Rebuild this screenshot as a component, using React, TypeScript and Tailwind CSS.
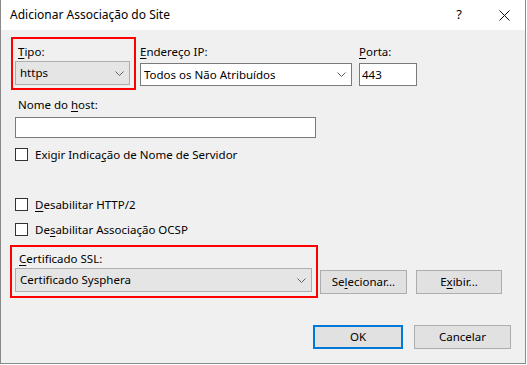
import type { ReactNode } from "react";

const FONT = { fontFamily: '"Noto Sans", "Liberation Sans", sans-serif' };

function Chevron() {
  return (
    <svg width="9" height="5" viewBox="0 0 9 5" className="shrink-0">
      <path d="M0.5 0.5 L4.5 4.5 L8.5 0.5" fill="none" stroke="#606060" strokeWidth="1" />
    </svg>
  );
}

function U({ children }: { children: ReactNode }) {
  return <span className="underline underline-offset-2 decoration-1">{children}</span>;
}

function Checkbox({ children }: { children: ReactNode }) {
  return (
    <label className="flex h-[13px] items-center gap-[7px]">
      <span className="h-[13px] w-[13px] shrink-0 border border-[#333333] bg-white" />
      <span className="leading-[16px]">{children}</span>
    </label>
  );
}

function Button({ children, width, primary }: { children: ReactNode; width: string; primary?: boolean }) {
  return (
    <button
      type="button"
      className={`flex h-[24px] items-center justify-center bg-[#e1e1e1] ${width} ${
        primary ? "border-2 border-[#0078d7]" : "border border-[#adadad]"
      }`}
    >
      {children}
    </button>
  );
}

export default function App() {
  return (
    <div className="h-[365px] w-[527px] bg-white text-[11.5px] text-black" style={FONT}>
      <div className="flex h-[364px] w-[526px] flex-col border-x border-b border-[#8a8a8a]">
        <div className="flex h-[30px] items-center bg-white pl-[9px] pr-[15px] text-[12px]">
          <span className="flex-1">Adicionar Associação do Site</span>
          <span className="mr-[37px] text-[13px]">?</span>
          <svg width="11" height="11" viewBox="0 0 11 11">
            <path d="M0.5 0.5 L10.5 10.5 M10.5 0.5 L0.5 10.5" stroke="#111" strokeWidth="1" />
          </svg>
        </div>

        <div className="relative flex-1 bg-[#f0f0f0] pl-[14px] pt-[14px]">
          <div className="pointer-events-none absolute left-[10px] top-[7px] h-[53px] w-[125px] border-2 border-[#ff0000]" />
          <div className="pointer-events-none absolute left-[9px] top-[215px] h-[53px] w-[308px] border-2 border-[#ff0000]" />

          <div className="flex items-start">
            <div className="w-[115px]">
              <div className="h-[16px] pl-[3px] leading-[16px]">
                <U>T</U>ipo:
              </div>
              <div className="mt-[1px] flex h-[24px] items-center justify-between border border-[#adadad] bg-[#e5e5e5] pl-[4px] pr-[5px]">
                <span>https</span>
                <Chevron />
              </div>
            </div>
            <div className="ml-[10px] w-[212px]">
              <div className="h-[16px] leading-[16px]">
                <U>E</U>ndereço IP:
              </div>
              <div className="mt-[3px] flex h-[23px] items-center justify-between border border-[#7a7a7a] bg-white pl-[3px] pr-[5px]">
                <span>Todos os Não Atribuídos</span>
                <Chevron />
              </div>
            </div>
            <div className="ml-[7px] w-[58px]">
              <div className="h-[16px] leading-[16px]">
                <U>P</U>orta:
              </div>
              <div className="mt-[3px] flex h-[23px] items-center border border-[#7a7a7a] bg-white pl-[2px]">443</div>
            </div>
          </div>

          <div className="mt-[11px] h-[16px] pl-[3px] leading-[16px]">
            Nome do <U>h</U>ost:
          </div>
          <div className="mt-[4px] h-[21px] w-[301px] border border-[#7a7a7a] bg-white" />

          <div className="mt-[10px]">
            <Checkbox>
              Exigir Indica<U>ç</U>ão de Nome de Servidor
            </Checkbox>
          </div>
          <div className="mt-[37px]">
            <Checkbox>
              <U>D</U>esabilitar HTTP/2
            </Checkbox>
          </div>
          <div className="mt-[12px]">
            <Checkbox>
              De<U>s</U>abilitar Associação OCSP
            </Checkbox>
          </div>

          <div className="mt-[15px] h-[16px] pl-[4px] leading-[16px]">
            <U>C</U>ertificado SSL:
          </div>
          <div className="mt-[1px] flex items-start">
            <div className="flex h-[24px] w-[297px] items-center justify-between border border-[#adadad] bg-[#e5e5e5] pl-[4px] pr-[5px]">
              <span>Certificado Sysphera</span>
              <Chevron />
            </div>
            <div className="ml-[8px] mt-[2px]">
              <Button width="w-[87px]">
                <span>
                  Se<U>l</U>ecionar...
                </span>
              </Button>
            </div>
            <div className="ml-[9px] mt-[2px]">
              <Button width="w-[86px]">
                <span>
                  E<U>x</U>ibir...
                </span>
              </Button>
            </div>
          </div>

          <div className="mt-[31px] flex pl-[298px]">
            <Button width="w-[90px]" primary>
              OK
            </Button>
            <div className="ml-[11px]">
              <Button width="w-[97px]">Cancelar</Button>
            </div>
          </div>
        </div>
      </div>
    </div>
  );
}
